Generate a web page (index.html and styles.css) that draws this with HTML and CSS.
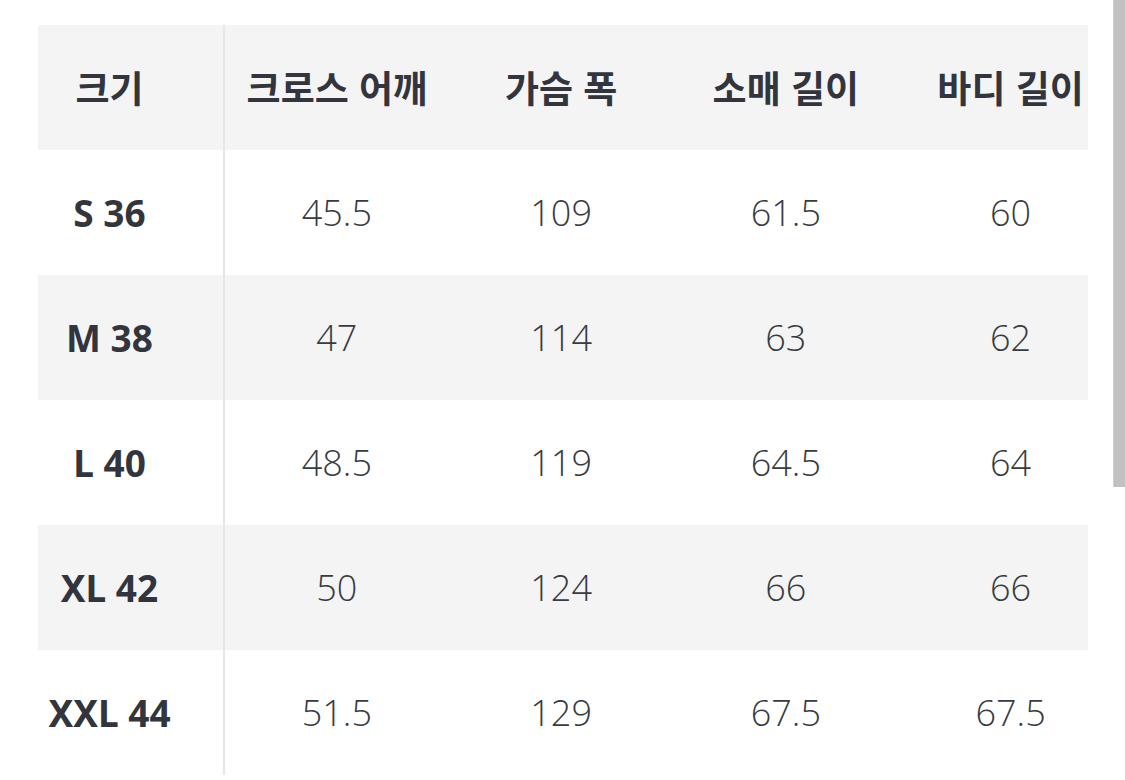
FILE: index.html
```html
<!DOCTYPE html>
<html lang="ko">
<head>
<meta charset="utf-8">
<link rel="stylesheet" href="styles.css">
</head>
<body>
<div class="page">
  <div class="scroller">
    <table class="size-table">
      <thead>
        <tr>
          <th class="first">크기</th>
          <th>크로스 어깨</th>
          <th>가슴 폭</th>
          <th>소매 길이</th>
          <th>바디 길이</th>
        </tr>
      </thead>
      <tbody>
        <tr><th class="first">S 36</th><td>45.5</td><td>109</td><td>61.5</td><td>60</td></tr>
        <tr class="alt"><th class="first">M 38</th><td>47</td><td>114</td><td>63</td><td>62</td></tr>
        <tr><th class="first">L 40</th><td>48.5</td><td>119</td><td>64.5</td><td>64</td></tr>
        <tr class="alt"><th class="first">XL 42</th><td>50</td><td>124</td><td>66</td><td>66</td></tr>
        <tr><th class="first">XXL 44</th><td>51.5</td><td>129</td><td>67.5</td><td>67.5</td></tr>
      </tbody>
    </table>
  </div>
  <div class="scrollbar"></div>
</div>
</body>
</html>
```

FILE: styles.css
```css
html, body {
  margin: 0;
  padding: 0;
  background: #ffffff;
}

body {
  font-family: "Open Sans", "Noto Sans", "Noto Sans CJK KR", sans-serif;
  color: #333333;
}

.page {
  position: relative;
  width: 1125px;
  height: 780px;
  overflow: hidden;
}

.scroller {
  margin: 25px 0 0 38px;
  width: 1050px;
  overflow: hidden;
}

.size-table {
  border-collapse: collapse;
  table-layout: fixed;
  width: 1086px;
}

.size-table th,
.size-table td {
  height: 125px;
  padding: 0;
  text-align: center;
  vertical-align: middle;
  font-size: 36px;
  line-height: 1;
  white-space: nowrap;
}

.size-table th {
  font-weight: 700;
  color: #32353d;
  font-size: 37px;
  font-family: "Noto Sans", "Open Sans", "Noto Sans CJK KR", sans-serif;
}

.size-table td {
  font-family: "Open Sans", "Noto Sans", sans-serif;
  font-weight: 300;
  color: #383b42;
  width: 225px;
}

.size-table .first {
  width: 186px;
  padding-right: 42px;
  box-sizing: border-box;
  border-right: 2px solid #e6e6e6;
}

.size-table thead tr {
  background: #f4f4f4;
}

.size-table thead th {
  font-family: "Noto Sans CJK KR", "Noto Sans", sans-serif;
}

.size-table tr.alt {
  background: #f4f4f4;
}

.scrollbar {
  position: absolute;
  top: 0;
  left: 1113px;
  width: 12px;
  height: 487px;
  background: #c1c1c1;
  border-left: 1px solid #d0d0d0;
  box-sizing: border-box;
}
```
